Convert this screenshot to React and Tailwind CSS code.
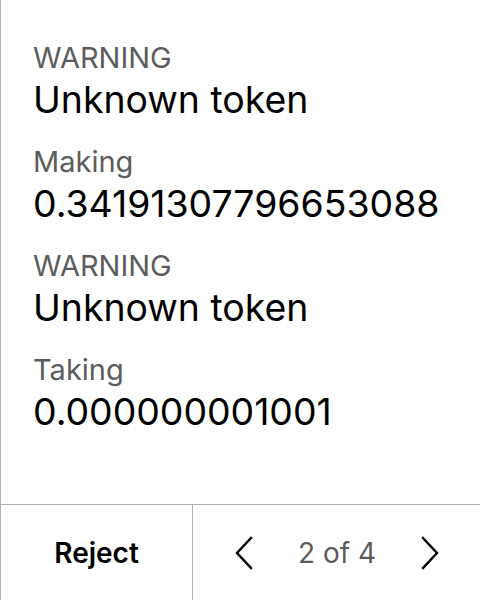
const rows = [
  { label: 'WARNING', value: 'Unknown token' },
  { label: 'Making', value: '0.34191307796653088' },
  { label: 'WARNING', value: 'Unknown token' },
  { label: 'Taking', value: '0.000000001001' },
];

function Field({ label, value }) {
  return (
    <div className="flex flex-col">
      <span className="text-[29px] leading-[34px] text-[#5c5c5c]">{label}</span>
      <span className="text-[37.4px] leading-[46px] pt-[2px] text-black">{value}</span>
    </div>
  );
}

function Chevron({ dir }) {
  return (
    <svg width="20" height="34" viewBox="0 0 20 34" fill="none" stroke="black" strokeWidth="2.4" strokeLinecap="square">
      {dir === 'left' ? <path d="M17 2 L3 17 L17 32" /> : <path d="M3 2 L17 17 L3 32" />}
    </svg>
  );
}

export default function App() {
  return (
    <div
      className="h-[600px] w-[480px] flex flex-col bg-white border-l border-[#b0b0b0]"
      style={{ fontFamily: 'Inter, "Noto Sans", sans-serif' }}
    >
      <div className="flex-1 flex flex-col gap-[22px] pl-[32px] pt-[41px]">
        {rows.map((r, i) => (
          <Field key={i} label={r.label} value={r.value} />
        ))}
      </div>
      <div className="h-[96px] flex border-t border-[#b0b0b0]">
        <button className="w-[192px] flex items-center justify-center text-[28px] font-semibold text-black border-r border-[#b0b0b0]">
          Reject
        </button>
        <div className="flex-1 flex items-center justify-between pl-[41px] pr-[40px] text-[#5c5c5c]">
          <Chevron dir="left" />
          <span className="text-[28px]">2 of 4</span>
          <Chevron dir="right" />
        </div>
      </div>
    </div>
  );
}
